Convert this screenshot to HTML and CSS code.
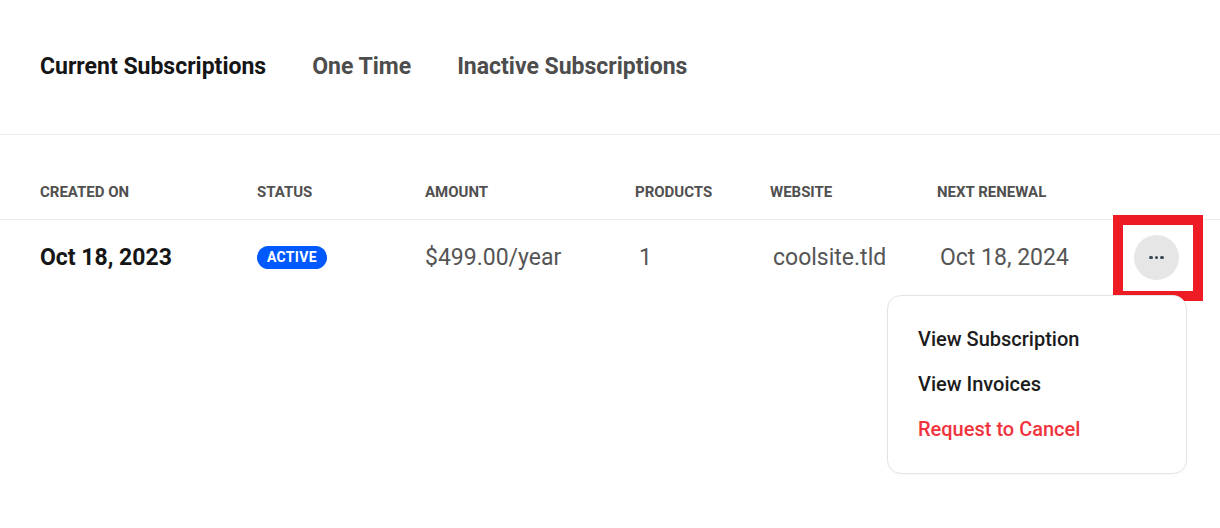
FILE: index.html
```html
<!DOCTYPE html>
<html lang="en">
<head>
<meta charset="utf-8">
<title>Subscriptions</title>
<link rel="stylesheet" href="styles.css">
</head>
<body>
<nav class="tabs">
  <a class="tab tab-active">Current Subscriptions</a>
  <a class="tab">One Time</a>
  <a class="tab">Inactive Subscriptions</a>
</nav>
<section class="table">
  <div class="row head">
    <div>Created On</div>
    <div>Status</div>
    <div>Amount</div>
    <div>Products</div>
    <div>Website</div>
    <div>Next Renewal</div>
    <div></div>
  </div>
  <div class="row body">
    <div class="date">Oct 18, 2023</div>
    <div><span class="badge">ACTIVE</span></div>
    <div class="val">$499.00/year</div>
    <div class="val num">1</div>
    <div class="val site">coolsite.tld</div>
    <div class="val renew">Oct 18, 2024</div>
    <div class="actions">
      <button class="more" aria-label="More actions"><span></span><span></span><span></span></button>
    </div>
    <div class="highlight"></div>
    <ul class="menu">
      <li>View Subscription</li>
      <li>View Invoices</li>
      <li class="danger">Request to Cancel</li>
    </ul>
  </div>
</section>
</body>
</html>
```
FILE: styles.css
```css
* { box-sizing: border-box; }
html, body { margin: 0; background: #fff; }
body {
  font-family: Roboto, "Noto Sans", "Liberation Sans", sans-serif;
  width: 1220px;
  height: 528px;
  overflow: hidden;
}
.tabs {
  display: flex;
  align-items: center;
  gap: 46px;
  height: 135px;
  padding: 0 40px 2px;
  border-bottom: 1px solid #ededed;
}
.tab {
  font-size: 23px;
  font-weight: 700;
  color: #4d4d4d;
  cursor: pointer;
}
.tab-active { color: #151515; }

.row {
  display: grid;
  grid-template-columns: 217px 168px 210px 135px 167px 176px 1fr;
  padding-left: 40px;
}
.head {
  height: 85px;
  align-items: end;
  padding-bottom: 18px;
  border-bottom: 1px solid #ededed;
  font-size: 15px;
  font-weight: 700;
  text-transform: uppercase;
  color: #505050;
}
.body {
  position: relative;
  align-items: center;
  padding-top: 15px;
  padding-bottom: 13px;
}
.date {
  font-size: 23px;
  font-weight: 700;
  color: #161616;
}
.val {
  font-size: 23px;
  color: #555;
}
.num { padding-left: 4px; }
.site { padding-left: 3px; }
.renew { padding-left: 3px; }
.badge {
  display: inline-block;
  background: #0058ff;
  color: #fff;
  font-size: 14px;
  font-weight: 700;
  line-height: 23px;
  height: 23px;
  padding: 0 10px;
  border-radius: 12px;
  letter-spacing: 0.3px;
  vertical-align: middle;
}
.actions {
  display: flex;
  justify-content: flex-start;
  padding-left: 21px;
}
.more {
  width: 45px;
  height: 45px;
  border: none;
  border-radius: 50%;
  background: #e6e6e6;
  display: flex;
  align-items: center;
  justify-content: center;
  gap: 2px;
  padding: 0;
  cursor: pointer;
}
.more span {
  width: 3.5px;
  height: 3.5px;
  border-radius: 50%;
  background: #3c4658;
}
.highlight {
  position: absolute;
  left: 1113px;
  top: -5px;
  width: 90px;
  height: 86px;
  border: 10px solid #ed1c24;
  pointer-events: none;
}
.menu {
  position: absolute;
  left: 887px;
  top: 75px;
  width: 300px;
  margin: 0;
  padding: 21px 30px;
  list-style: none;
  background: #fff;
  border: 1px solid #e4e4e4;
  border-radius: 14px;
  box-shadow: 0 1px 3px rgba(0,0,0,0.03);
}
.menu li {
  font-size: 20px;
  font-weight: 500;
  line-height: 45px;
  color: #1c1c1c;
  cursor: pointer;
}
.menu .danger { color: #f0343e; }
```
